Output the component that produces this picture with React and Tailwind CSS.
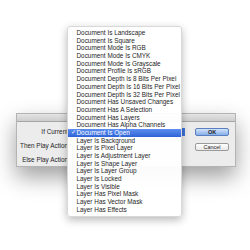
import React from "react";

const items = [
  "Document Is Landscape",
  "Document Is Square",
  "Document Mode Is RGB",
  "Document Mode Is CMYK",
  "Document Mode Is Grayscale",
  "Document Profile Is sRGB",
  "Document Depth Is 8 Bits Per Pixel",
  "Document Depth Is 16 Bits Per Pixel",
  "Document Depth Is 32 Bits Per Pixel",
  "Document Has Unsaved Changes",
  "Document Has A Selection",
  "Document Has Layers",
  "Document Has Alpha Channels",
  "Document Is Open",
  "Layer Is Background",
  "Layer Is Pixel Layer",
  "Layer Is Adjustment Layer",
  "Layer Is Shape Layer",
  "Layer Is Layer Group",
  "Layer Is Locked",
  "Layer Is Visible",
  "Layer Has Pixel Mask",
  "Layer Has Vector Mask",
  "Layer Has Effects",
];

export default function App() {
  return (
    <div
      className="relative w-[250px] h-[250px] bg-white overflow-hidden text-[#1e1e1e]"
      style={{ fontFamily: '"Liberation Sans", Arial, sans-serif' }}
    >
      <div className="pt-[113px] pl-[16px]">
        <div className="w-[220px] h-[54px] flex flex-col border border-[#b4b4b4] shadow-[0_10px_22px_rgba(0,0,0,0.38)]">
          <div className="h-[8px] bg-gradient-to-b from-[#e4e4e4] to-[#cdcdcd] border-b border-[#a6a6a6]" />
          <div className="flex-1 bg-[#ececec] flex">
            <div className="w-[51px] flex flex-col items-end pt-[6px] gap-[6px] text-[6.4px] leading-[8px] whitespace-nowrap">
              <div>If Current</div>
              <div>Then Play Action</div>
              <div>Else Play Action</div>
            </div>
            <div className="flex-1" />
            <div className="w-[34px] mr-[6px] flex flex-col pt-[6px] gap-[7px]">
              <div className="h-[8px] rounded-[2px] border border-[#5a7fc0] bg-gradient-to-b from-[#d3e3fa] to-[#86aeea] text-[5.5px] leading-[6px] font-bold flex items-center justify-center">
                OK
              </div>
              <div className="h-[8px] rounded-[2px] border border-[#9a9a9a] bg-gradient-to-b from-white to-[#e8e8e8] text-[5.5px] leading-[6px] flex items-center justify-center">
                Cancel
              </div>
            </div>
          </div>
        </div>
      </div>

      <div className="absolute left-[181px] top-[128px] w-[4px] h-[8px] bg-[#3f72dc]" />

      <div className="absolute left-[67px] top-[26px] w-[115px] pt-[2px] pb-[2px] bg-white/95 rounded-[3px] shadow-[0_3px_8px_rgba(0,0,0,0.28)] border border-[#d8d8d8]">
        {items.map((t) => {
          const sel = t === "Document Is Open";
          return (
            <div
              key={t}
              className={
                "h-[7.7px] flex items-center text-[6.4px] leading-[7.7px] whitespace-nowrap " +
                (sel ? "bg-gradient-to-b from-[#5c8ff0] to-[#2f63d6] text-white" : "")
              }
            >
              <span className="w-[8.5px] pl-[2.5px] text-[6px]">{sel ? "✓" : ""}</span>
              <span>{t}</span>
            </div>
          );
        })}
      </div>
    </div>
  );
}
